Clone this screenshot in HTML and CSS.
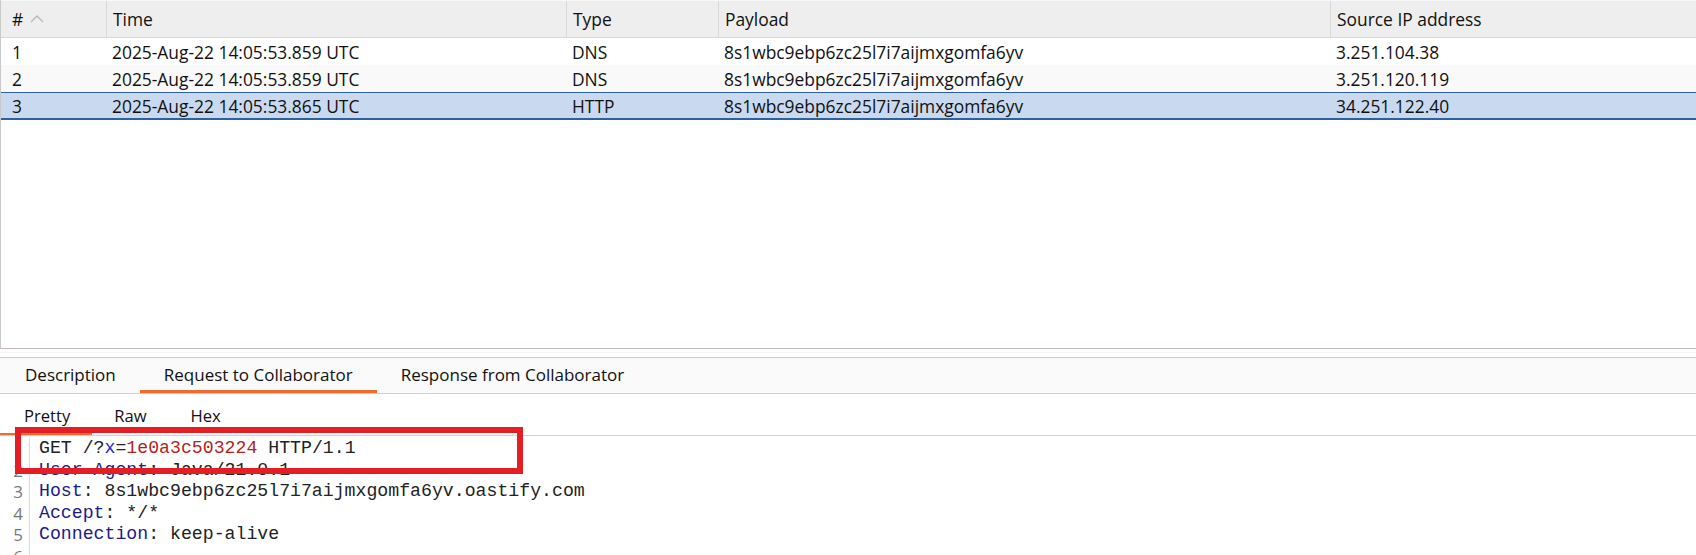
FILE: index.html
```html
<!DOCTYPE html>
<html>
<head>
<meta charset="utf-8">
<link rel="stylesheet" href="styles.css">
</head>
<body>
<div class="app">
  <div class="table-panel">
    <div class="row head">
      <div class="cell first">#<svg class="sort" width="14" height="8" viewBox="0 0 14 8"><polyline points="1,7 7,1 13,7" fill="none" stroke="#b8b8b8" stroke-width="1.3"/></svg></div>
      <div class="cell">Time</div>
      <div class="cell">Type</div>
      <div class="cell">Payload</div>
      <div class="cell">Source IP address</div>
    </div>
    <div class="row">
      <div class="cell first">1</div>
      <div class="cell">2025-Aug-22 14:05:53.859 UTC</div>
      <div class="cell">DNS</div>
      <div class="cell">8s1wbc9ebp6zc25l7i7aijmxgomfa6yv</div>
      <div class="cell">3.251.104.38</div>
    </div>
    <div class="row alt">
      <div class="cell first">2</div>
      <div class="cell">2025-Aug-22 14:05:53.859 UTC</div>
      <div class="cell">DNS</div>
      <div class="cell">8s1wbc9ebp6zc25l7i7aijmxgomfa6yv</div>
      <div class="cell">3.251.120.119</div>
    </div>
    <div class="row selected">
      <div class="cell first">3</div>
      <div class="cell">2025-Aug-22 14:05:53.865 UTC</div>
      <div class="cell">HTTP</div>
      <div class="cell">8s1wbc9ebp6zc25l7i7aijmxgomfa6yv</div>
      <div class="cell">34.251.122.40</div>
    </div>
  </div>
  <div class="splitter"></div>
  <div class="detail">
    <div class="tabs">
      <div class="tab">Description</div>
      <div class="tab active">Request to Collaborator</div>
      <div class="tab">Response from Collaborator</div>
    </div>
    <div class="subtabs">
      <div class="subtab active">Pretty</div>
      <div class="subtab">Raw</div>
      <div class="subtab">Hex</div>
    </div>
    <div class="code">
      <div class="gutter">
        <div>1</div><div>2</div><div>3</div><div>4</div><div>5</div><div>6</div>
      </div>
      <div class="lines">
        <div class="line">GET /?<span class="param">x</span>=<span class="val">1e0a3c503224</span> HTTP/1.1</div>
        <div class="line"><span class="hname">User-Agent</span>: Java/21.0.1</div>
        <div class="line"><span class="hname">Host</span>: 8s1wbc9ebp6zc25l7i7aijmxgomfa6yv.oastify.com</div>
        <div class="line"><span class="hname">Accept</span>: */*</div>
        <div class="line"><span class="hname">Connection</span>: keep-alive</div>
        <div class="line">&nbsp;</div>
      </div>
      <div class="highlight"></div>
    </div>
  </div>
</div>
</body>
</html>
```
FILE: styles.css
```css
* { box-sizing: border-box; }
html, body { margin: 0; padding: 0; background: #ffffff; }
body {
  width: 1696px;
  height: 555px;
  overflow: hidden;
  font-family: "Open Sans", "Noto Sans", sans-serif;
  font-size: 17.4px;
  color: #111111;
}
.app { display: flex; flex-direction: column; height: 555px; }

.table-panel {
  flex: 0 0 349px;
  height: 349px;
  border-left: 1px solid #c9c9c9;
  border-bottom: 1px solid #c4bcc0;
  background: #fff;
}
.row {
  display: grid;
  grid-template-columns: 105px 460px 152px 612px 1fr;
  height: 27px;
  align-items: center;
}
.row.head {
  height: 38px;
  background: #eeeeee;
  border-top: 1px solid #f7f7f7;
  border-bottom: 1px solid #d8d8d8;
}
.cell { padding-left: 6px; white-space: nowrap; display: flex; align-items: center; height: 100%; }
.cell.first { padding-left: 11px; }
.head .cell + .cell { border-left: 1px solid #d9d9d9; }
.sort { margin-left: 7px; }
.row.alt { background: #f9f9f9; }
.row.selected {
  background: #c9daf0;
  border-top: 1px solid #2e60a0;
  border-bottom: 2px solid #2e60a0;
  height: 28px;
}

.splitter {
  flex: 0 0 8px;
  background: #f3f3f3;
  border-top: 3px solid #ffffff;
  border-bottom: 4px solid #ffffff;
}

.detail { flex: 1; border-top: 1px solid #c8c8c8; position: relative; min-height: 0; }
.tabs {
  display: flex;
  height: 36px;
  background: #fafafa;
  border-bottom: 1px solid #d0d0d0;
  padding-left: 1px;
  font-size: 17px;
}
.tab {
  padding: 1px 24px 0;
  display: flex;
  align-items: center;
  height: 100%;
  border-bottom: 3px solid transparent;
}
.tab.active { border-bottom-color: #f26a2e; }

.subtabs {
  display: flex;
  height: 42px;
  border-bottom: 1px solid #d2d2d2;
  padding-left: 2px;
  font-size: 16.6px;
}
.subtab {
  padding: 4px 22px 0;
  display: flex;
  align-items: center;
  border-bottom: 2px solid transparent;
}
.subtab.active { border-bottom-color: #f26a2e; margin-left: -2px; padding-left: 24px; }

.code { display: flex; position: relative; padding-top: 2px; }
.gutter {
  width: 30px;
  border-right: 1px solid #dcdcdc;
  color: #777;
  text-align: right;
  padding-right: 6px;
  font-size: 17px;
}
.gutter div, .line { height: 21.5px; line-height: 21.5px; }
.lines {
  padding-left: 9px;
  font-family: "Liberation Mono", "Courier New", monospace;
  font-size: 18.2px;
  color: #222;
}
.line { white-space: pre; }
.param { color: #2525e0; }
.val { color: #b21f1f; }
.hname { color: #1b1b8a; }
.highlight {
  position: absolute;
  left: 15px;
  top: -9px;
  width: 508px;
  height: 47px;
  border: 6px solid #e31e24;
}
```
